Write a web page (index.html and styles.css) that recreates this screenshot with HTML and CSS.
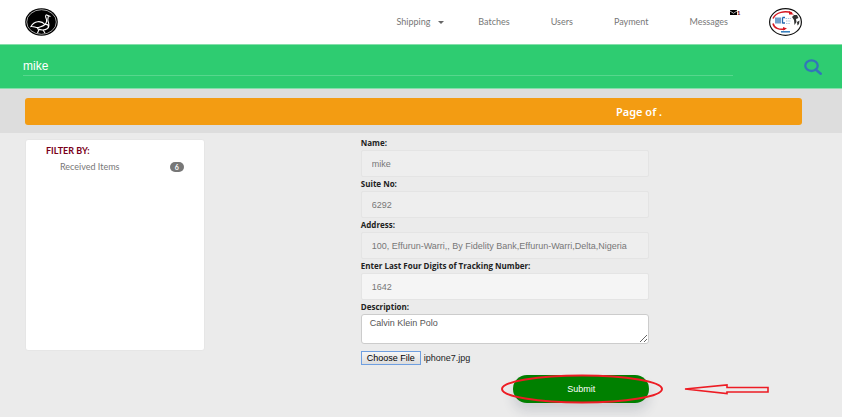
FILE: index.html
```
<!DOCTYPE html>
<html lang="en">
<head>
<meta charset="utf-8">
<title>Received Items</title>
<link rel="stylesheet" href="styles.css">
</head>
<body>
<header class="topbar">
  <a class="logo" href="#" aria-label="Home">
    <svg viewBox="0 0 33 28" width="33" height="28">
      <ellipse cx="16.500" cy="14" rx="16.300" ry="13.800" fill="#000"/>
      <ellipse cx="16.500" cy="14" rx="14.800" ry="12.300" fill="none" stroke="#ccc" stroke-width=".8"/>
      <path d="M25.500 8.500 22.800 7.600C21.500 6 20 7.400 20.800 9.600C22 12 22.500 14 20 16.500C23 16 24.500 18 22.500 20.500C19 23 15 22 12 20.500M22.800 7.600C24.500 8.500 22 10 23 13C24 16 25 18.500 22.500 20.500M20 16.500C16 12 9 13 6 18.500C9 18 10.500 20 13.500 19.500C16 18.700 18 18.500 20 16.500M14 21.500 12.500 25M18 22 20 25" fill="none" stroke="#fff" stroke-width="1.100"/>
    </svg>
  </a>
  <nav class="nav">
    <a class="has-menu" href="#">Shipping<span class="caret"></span></a>
    <a href="#">Batches</a>
    <a href="#">Users</a>
    <a href="#">Payment</a>
    <a class="messages" href="#">Messages
      <span class="mail"><svg viewBox="0 0 7 5" width="7" height="5"><path d="M0 0H7V5H0Z" fill="#000"/><path d="M0 1 3.500 3.300 7 1" fill="none" stroke="#fff" stroke-width=".7"/></svg><span class="count">1</span></span>
    </a>
  </nav>
  <a class="avatar" href="#" aria-label="Account">
    <svg viewBox="0 0 33 28" width="33" height="28">
      <ellipse cx="16.500" cy="14" rx="15.900" ry="13.300" fill="#fff" stroke="#111" stroke-width="1.200"/>
      <path d="M4 10.500C7 4 16 2.500 23 5M4 15.500C5 20 10 22 16 21" fill="none" stroke="#d51720" stroke-width="1.500"/>
      <path d="M20 3 25 6.500 20 6.500ZM14 19 18 20.500 14 22.500Z" fill="#d51720"/>
      <path d="M7 9.500V15.500M9 9.500V15.500M11 9.500V15.500M13.500 9.500V15.500M16 9.500H13.500M16 15H13.500" fill="none" stroke="#246aae" stroke-width="1.300"/>
      <path d="M16.500 10.500H22M17 13H22M17 15.500H21" stroke="#a9c5df" stroke-width="1" stroke-dasharray="1.500 .8"/>
      <path d="M12 23.800H21" stroke="#2c78ba" stroke-width="1.500"/>
      <path d="M23 9 25 7 28 7 29.500 10 27 11 27.500 14 25.500 17 25 12ZM28 14 30.500 12.500 30 16 28.500 17.500Z" fill="#333"/>
    </svg>
  </a>
</header>

<form class="search" role="search">
  <input class="search-input" type="text" value="mike" aria-label="Search">
  <button class="search-button" type="button" aria-label="Search">
    <svg viewBox="0 0 18 16" width="18" height="16"><ellipse cx="7.500" cy="6.700" rx="6.200" ry="5.300" fill="none" stroke="#3276b9" stroke-width="2.300"/><path d="M12 10.700 16.700 14.700" stroke="#3276b9" stroke-width="2.600" stroke-linecap="round"/></svg>
  </button>
</form>

<div class="pager"><div class="pager-bar">Page of .</div></div>

<main class="content">
  <aside class="filter">
    <h2>FILTER BY:</h2>
    <a class="filter-item" href="#">Received Items <span class="badge">6</span></a>
  </aside>
  <form class="details">
    <label for="name">Name:</label>
    <input class="field" id="name" type="text" value="mike" readonly>
    <label for="suite">Suite No:</label>
    <input class="field" id="suite" type="text" value="6292" readonly>
    <label for="address">Address:</label>
    <input class="field" id="address" type="text" value="100, Effurun-Warri,, By Fidelity Bank,Effurun-Warri,Delta,Nigeria" readonly>
    <label for="tracking">Enter Last Four Digits of Tracking Number:</label>
    <input class="field editable" id="tracking" type="text" value="1642">
    <label for="description">Description:</label>
    <textarea id="description">Calvin Klein Polo</textarea>
    <div class="file-row">
      <input class="file-input" id="file" type="file">
      <label class="file-button" for="file">Choose File</label>
      <span>iphone7.jpg</span>
    </div>
    <div class="submit-row">
      <button class="submit" type="button">Submit</button>
      <svg class="marker" viewBox="0 0 270 30" width="270" height="30" aria-hidden="true">
        <g fill="none" stroke="#ed1c24" stroke-width="2">
          <ellipse cx="82" cy="15" rx="80" ry="13.500"/>
          <path d="M185 15 227 11V13.500H268V18H227V19.500Z" stroke-width="1.600"/>
        </g>
      </svg>
    </div>
  </form>
</main>
</body>
</html>
```
FILE: styles.css
```
* { box-sizing: border-box; }

body {
  margin: 0;
  min-height: 100vh;
  background: #ebebeb;
  color: #222;
  font-family: "Liberation Sans", Arial, sans-serif;
  font-size: 9px;
  overflow-x: hidden;
}

a { color: inherit; text-decoration: none; }
svg { display: block; }
input, textarea, button { font: inherit; color: inherit; }

.topbar {
  display: flex;
  align-items: center;
  height: 44px;
  padding: 0 40px 0 25px;
  background: #fff;
}

.nav {
  display: flex;
  align-items: center;
  gap: 41px;
  margin: 0 41px 0 auto;
  color: #777;
  font: 9px/12px Lato, sans-serif;
}

.has-menu { display: flex; align-items: center; gap: 8px; margin-right: -7px; }
.caret { border: 3px solid transparent; border-top-color: #666; border-bottom: 0; }
.messages { position: relative; }
.mail { position: absolute; left: 100%; top: -6px; display: flex; align-items: center; margin-left: 2px; }
.count { color: #7a0019; font-size: 6px; line-height: 5px; font-weight: bold; }

.search {
  display: flex;
  align-items: center;
  height: 45px;
  padding: 0 20px 0 23px;
  background: #2ecc71;
  border: solid #86dfab;
  border-width: 1px 0;
}

.search-input {
  flex: 1;
  height: 19px;
  margin-right: 71px;
  padding: 0;
  border: 0;
  border-bottom: 1px solid #57d68d;
  background: none;
  color: #fff;
  font-size: 12px;
  outline: 0;
}

.search-button { padding: 0; border: 0; background: none; }

.pager { padding: 9px 40px 8px 25px; background: #ddd; }
.pager-bar {
  height: 27px;
  padding-right: 18%;
  border-radius: 3px;
  background: #f39c12;
  color: #fff;
  font: 600 11px/27px "Noto Sans", sans-serif;
  text-align: right;
}

.content { display: flex; align-items: flex-start; padding: 4px 0 0 25px; }

.filter {
  width: 22%;
  min-height: 212px;
  margin-top: 2px;
  padding: 5px 20px;
  border: 1px solid #e6e6e6;
  border-radius: 3px;
  background: #fff;
  font-family: Lato, sans-serif;
}
.filter h2 { margin: 0 0 4px; color: #7a0019; font-size: 9px; line-height: 12px; }
.filter-item {
  display: flex;
  align-items: center;
  justify-content: space-between;
  padding-left: 14px;
  color: #777;
  font-size: 9px;
  line-height: 12px;
}
.badge {
  width: 14px;
  border-radius: 5px;
  background: #777;
  color: #fff;
  font-size: 7px;
  font-weight: bold;
  line-height: 10px;
  text-align: center;
}

.details { width: 35.3%; margin-left: 19.1%; }
.details > label { display: block; height: 13px; font: bold 8px/11px "Open Sans", sans-serif; }

.field {
  display: block;
  width: 100%;
  height: 27px;
  margin-bottom: 1px;
  padding: 0 10px;
  border: 1px solid #e4e4e4;
  border-radius: 2px;
  background: #eee;
  color: #777;
}
.field.editable { background: #f5f5f5; }

textarea {
  display: block;
  width: 100%;
  height: 30px;
  padding: 3px 8px;
  border: 1px solid #ccc;
  border-radius: 3px;
  background: #fff;
  color: #555;
}

.file-row { display: flex; align-items: center; gap: 3px; margin-top: 7px; position: relative; }
.file-input { position: absolute; width: 1px; height: 1px; opacity: 0; }
.file-button {
  padding: 0 5px;
  border: 1px solid #6f9fe0;
  background: linear-gradient(#f6f6f6, #ddd);
  line-height: 12px;
  color: #000;
}

.submit-row { position: relative; width: 136px; margin: 10px 0 0 auto; }
.submit {
  display: block;
  width: 100%;
  height: 28px;
  border: 0;
  border-radius: 14px;
  background: #008000;
  color: #fff;
  box-shadow: 0 8px 12px rgba(50, 60, 90, .16);
}
.marker { position: absolute; left: -13px; top: -1px; pointer-events: none; }
```
